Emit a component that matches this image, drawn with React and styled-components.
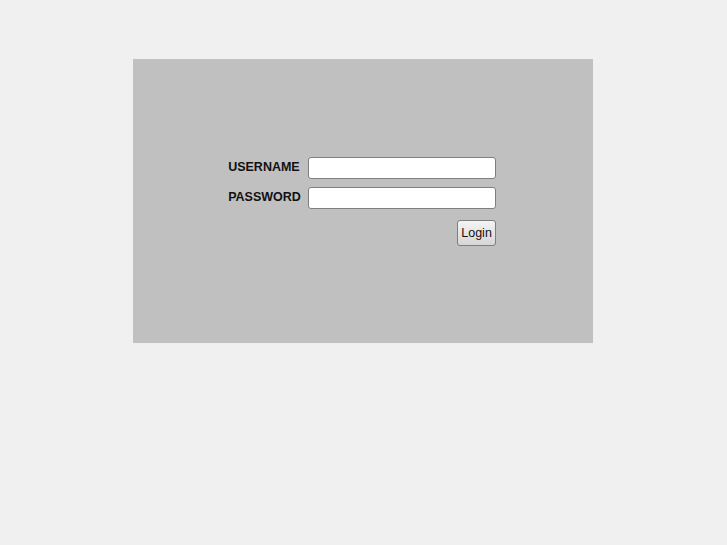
import React from "react";
import styled, { createGlobalStyle } from "styled-components";

const GlobalStyle = createGlobalStyle`
  html, body {
    margin: 0;
    padding: 0;
    background-color: #f0f0f0;
    font-family: "Liberation Sans", Arial, sans-serif;
  }
`;

const Page = styled.div`
  width: 100%;
  display: flex;
  justify-content: center;
  padding-top: 59px;
`;

const Panel = styled.div`
  width: 460px;
  height: 284px;
  margin-left: -1px;
  background-color: #c0c0c0;
  display: flex;
  align-items: center;
  justify-content: center;
`;

const LoginForm = styled.form`
  display: grid;
  grid-template-columns: auto 188px;
  column-gap: 7px;
  row-gap: 8px;
  align-items: center;
  margin-left: -2px;
  margin-top: 1px;
`;

const Label = styled.label`
  font-size: 12.5px;
  font-weight: bold;
  color: #111;
  padding-bottom: 2px;
`;

const Field = styled.input`
  box-sizing: border-box;
  width: 188px;
  height: 22px;
  margin: 0;
  padding: 2px 4px;
  border: 1px solid #7f7f7f;
  border-radius: 3px;
  background: #fff;
  font-family: inherit;
  font-size: 13px;
  outline: none;
`;

const Actions = styled.div`
  grid-column: 2;
  display: flex;
  justify-content: flex-end;
  margin-top: 3px;
`;

const Button = styled.button`
  box-sizing: border-box;
  height: 26px;
  padding: 0 3px;
  border: 1px solid #7f7f7f;
  border-radius: 3px;
  background: linear-gradient(#f4f4f4, #d6d6d6);
  font-family: inherit;
  font-size: 12.5px;
  color: #111;
  cursor: pointer;
`;

export default function App() {
  return (
    <>
      <GlobalStyle />
      <Page>
        <Panel>
          <LoginForm onSubmit={(e) => e.preventDefault()}>
            <Label htmlFor="username">USERNAME</Label>
            <Field id="username" type="text" />
            <Label htmlFor="password">PASSWORD</Label>
            <Field id="password" type="password" />
            <Actions>
              <Button type="submit">Login</Button>
            </Actions>
          </LoginForm>
        </Panel>
      </Page>
    </>
  );
}
